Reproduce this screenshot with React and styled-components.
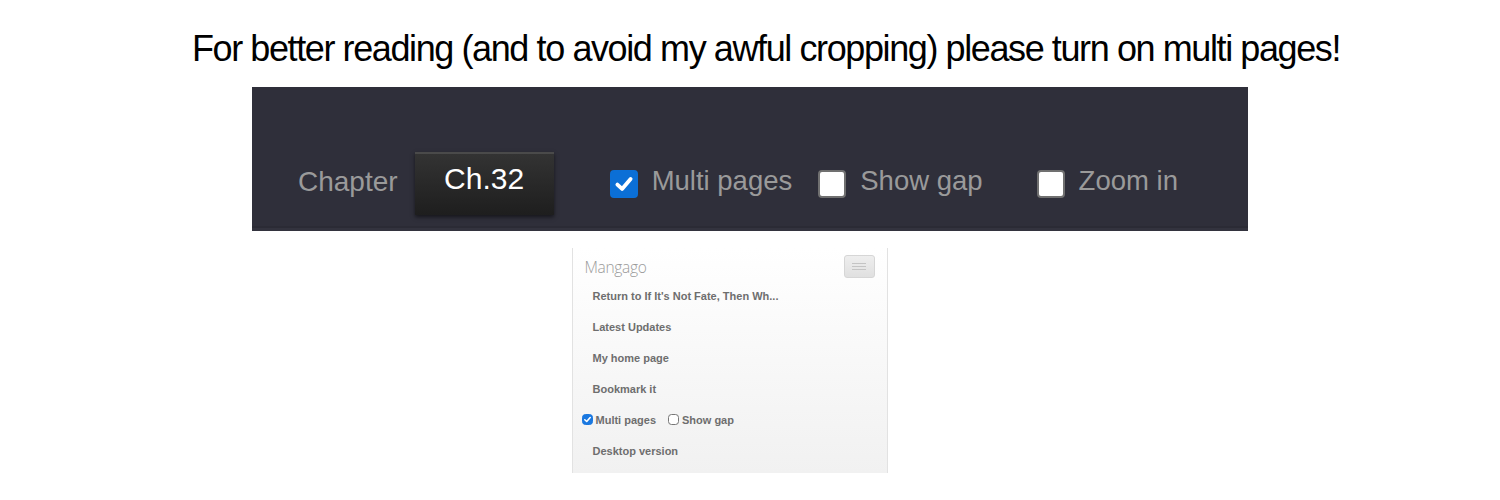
import React from "react";
import styled, { createGlobalStyle } from "styled-components";

const Global = createGlobalStyle`
  html, body { margin: 0; padding: 0; background: #ffffff; }
  body { font-family: "Liberation Sans", Arial, sans-serif; }
`;

const Page = styled.div`
  width: 1500px;
  height: 500px;
  display: flex;
  flex-direction: column;
  align-items: center;
  overflow: hidden;
`;

const Heading = styled.h1`
  margin: 27px 0 0 32px;
  font-family: "Liberation Sans", Arial, sans-serif;
  font-weight: 400;
  font-size: 36px;
  line-height: 44px;
  letter-spacing: -1.4px;
  color: #000;
  height: 44px;
`;

const Toolbar = styled.div`
  margin-top: 16px;
  width: 996px;
  height: 144px;
  box-sizing: border-box;
  background: #2f2f3a;
  border-bottom: 3px solid #33333e;
  box-shadow: inset 0 -2px 0 #2b2b35;
  display: flex;
  align-items: flex-end;
  padding: 0 0 12px 46px;
`;

const Label = styled.span`
  font-size: 28px;
  color: #9a9a9a;
  line-height: 30px;
  margin-bottom: 19px;
`;

const ChapterButton = styled.div`
  margin-left: 17px;
  width: 139px;
  height: 63px;
  margin-bottom: 1px;
  box-sizing: border-box;
  background: linear-gradient(#333333, #1e1e1e);
  border-top: 2px solid #4a4a4a;
  box-shadow: 0 2px 4px rgba(0, 0, 0, 0.55);
  color: #ffffff;
  font-size: 30px;
  display: flex;
  justify-content: center;
  padding-top: 8px;
`;

const Option = styled.label`
  display: flex;
  align-items: center;
  margin-left: ${(p) => p.$gap}px;
  margin-bottom: 18px;
  gap: 14px;
`;

const Box = styled.span`
  width: 28px;
  height: 28px;
  box-sizing: border-box;
  border-radius: 4px;
  display: flex;
  align-items: center;
  justify-content: center;
  background: ${(p) => (p.$on ? "#0b6fd6" : "#ffffff")};
  border: 2px solid ${(p) => (p.$on ? "#0b6fd6" : "#707070")};
`;

const OptionText = styled.span`
  font-size: 27.5px;
  color: #9a9a9a;
  line-height: 22px;
  padding-bottom: 6px;
`;

const Phone = styled.div`
  margin: 17px 41px 0 0;
  width: 316px;
  height: 225px;
  box-sizing: border-box;
  border-left: 1px solid #e2e2e2;
  border-right: 1px solid #e2e2e2;
  background: linear-gradient(#ffffff, #f1f1f1);
  padding: 6px 12px 0 12px;
  font-family: "Liberation Sans", Arial, sans-serif;
`;

const PhoneHeader = styled.div`
  display: flex;
  justify-content: space-between;
  align-items: center;
  height: 24px;
  margin-bottom: 2px;
`;

const Brand = styled.span`
  font-family: "Open Sans", "Liberation Sans", sans-serif;
  font-weight: 300;
  font-size: 15.5px;
  color: #9a9a9a;
  letter-spacing: -0.3px;
  margin-top: 1px;
`;

const MenuButton = styled.div`
  width: 31px;
  height: 23px;
  box-sizing: border-box;
  border: 1px solid #d6d6d6;
  border-radius: 3px;
  background: linear-gradient(#eeeeee, #e0e0e0);
  display: flex;
  flex-direction: column;
  justify-content: center;
  align-items: center;
  gap: 2px;
`;

const Bar = styled.span`
  width: 14px;
  height: 1px;
  background: #c4c4c4;
`;

const MenuList = styled.div`
  display: flex;
  flex-direction: column;
`;

const MenuItem = styled.div`
  height: 31px;
  display: flex;
  align-items: center;
  padding-left: ${(p) => (p.$flush ? 0 : 8)}px;
  margin-left: ${(p) => (p.$flush ? -3 : 0)}px;
  font-size: 11px;
  font-weight: 700;
  color: #6e6e6e;
  gap: 12px;
`;

const Mini = styled.span`
  display: inline-flex;
  align-items: center;
  gap: 3px;
`;

const MiniBox = styled.span`
  width: 11px;
  height: 11px;
  box-sizing: border-box;
  border-radius: 3.5px;
  display: inline-flex;
  align-items: center;
  justify-content: center;
  background: ${(p) => (p.$on ? "#1a78e0" : "#ffffff")};
  border: 1px solid ${(p) => (p.$on ? "#1a78e0" : "#777777")};
`;

const Check = ({ size }) => (
  <svg width={size} height={size} viewBox="0 0 16 16">
    <path d="M3.2 8.4 L6.6 11.6 L12.8 4.4" fill="none" stroke="#ffffff" strokeWidth="2.8" strokeLinecap="round" strokeLinejoin="round" />
  </svg>
);

export default function App() {
  return (
    <Page>
      <Global />
      <Heading>For better reading (and to avoid my awful cropping) please turn on multi pages!</Heading>
      <Toolbar>
        <Label>Chapter</Label>
        <ChapterButton>Ch.32</ChapterButton>
        <Option $gap={56}>
          <Box $on><Check size={22} /></Box>
          <OptionText>Multi pages</OptionText>
        </Option>
        <Option $gap={26}>
          <Box />
          <OptionText>Show gap</OptionText>
        </Option>
        <Option $gap={54}>
          <Box />
          <OptionText>Zoom in</OptionText>
        </Option>
      </Toolbar>
      <Phone>
        <PhoneHeader>
          <Brand>Mangago</Brand>
          <MenuButton>
            <Bar />
            <Bar />
            <Bar />
          </MenuButton>
        </PhoneHeader>
        <MenuList>
          <MenuItem>Return to If It's Not Fate, Then Wh...</MenuItem>
          <MenuItem>Latest Updates</MenuItem>
          <MenuItem>My home page</MenuItem>
          <MenuItem>Bookmark it</MenuItem>
          <MenuItem $flush>
            <Mini>
              <MiniBox $on><Check size={9} /></MiniBox>
              Multi pages
            </Mini>
            <Mini>
              <MiniBox />
              Show gap
            </Mini>
          </MenuItem>
          <MenuItem>Desktop version</MenuItem>
        </MenuList>
      </Phone>
    </Page>
  );
}
